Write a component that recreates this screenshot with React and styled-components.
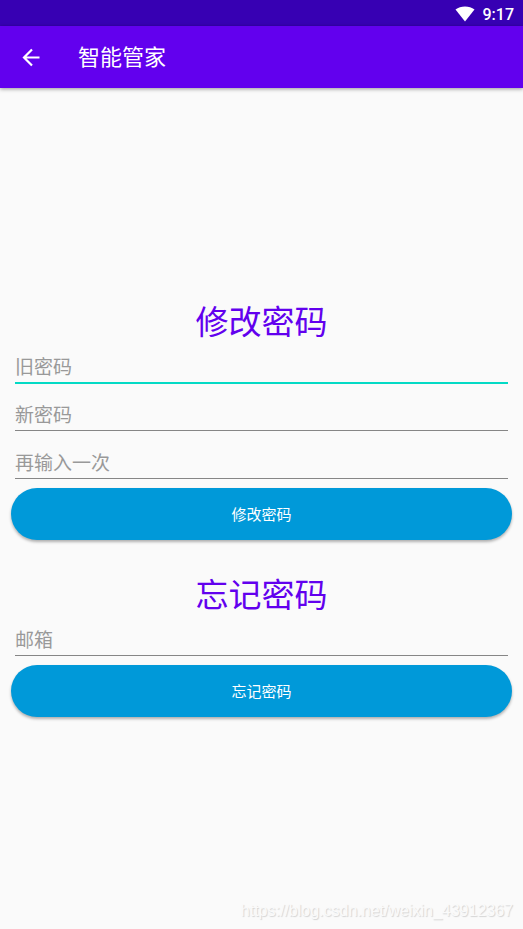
import React, { useState } from "react";
import styled, { createGlobalStyle } from "styled-components";

const GlobalStyle = createGlobalStyle`
  * {
    box-sizing: border-box;
  }
  body {
    margin: 0;
    background: #fafafa;
    font-family: Roboto, "Noto Sans CJK SC", sans-serif;
  }
`;

const Page = styled.div`
  min-height: 100vh;
  display: flex;
  flex-direction: column;
  position: relative;
`;

const StatusBar = styled.div`
  height: 26px;
  padding: 2px 9px 0 0;
  display: flex;
  justify-content: flex-end;
  align-items: center;
  gap: 8px;
  background: #3700b3;
  color: white;
  font-size: 16px;
  font-weight: 500;
  line-height: 24px;
`;

const Clock = styled.span`
  padding-top: 2px;
`;

const AppBar = styled.header`
  height: 62px;
  padding: 0 20px;
  display: flex;
  align-items: center;
  gap: 36px;
  background: #6200ee;
  color: white;
  box-shadow: 0 1px 4px rgba(0, 0, 0, 0.4);
`;

const BackButton = styled.button`
  display: flex;
  padding: 0;
  border: none;
  background: none;
  color: inherit;
  cursor: pointer;
`;

const Title = styled.h1`
  margin: 0;
  padding-top: 2px;
  font-size: 22px;
  font-weight: 400;
  line-height: 32px;
`;

const Main = styled.main`
  flex: 1;
  display: flex;
  flex-direction: column;
  justify-content: center;
  gap: 24px;
`;

const Form = styled.form`
  display: flex;
  flex-direction: column;
  padding: 0 11px 5px;
`;

const Heading = styled.h2`
  margin: 0;
  padding-top: 10px;
  color: #6200ee;
  font-size: 33px;
  font-weight: 400;
  line-height: 34px;
  text-align: center;
`;

const Field = styled.label`
  display: block;
  height: 48px;
  padding: 8px 4px 0;
`;

const Input = styled.input`
  display: block;
  width: 100%;
  height: 36px;
  padding: 4px 0 0;
  border: none;
  border-radius: 0;
  outline: none;
  background: linear-gradient(
      ${(props) => (props.$active ? "#03dac5, #03dac5" : "#868686, #868686")}
    )
    left bottom / 100% ${(props) => (props.$active ? "2px" : "1px")} no-repeat;
  background-position: left bottom ${(props) => (props.$active ? "0" : "1px")};
  color: #212121;
  font-family: inherit;
  font-size: 19px;
  &::placeholder {
    color: #999999;
    opacity: 1;
  }
`;

const Button = styled.button`
  height: 52px;
  margin-top: 4px;
  border: none;
  border-radius: 26px;
  background: #0099d9;
  color: white;
  font-family: inherit;
  font-size: 15px;
  box-shadow: 0 2px 3px rgba(0, 0, 0, 0.3);
  cursor: pointer;
`;

const Watermark = styled.div`
  position: absolute;
  right: 10px;
  bottom: 8px;
  color: #fafafa;
  font-family: "Liberation Sans", Arial, sans-serif;
  font-size: 16px;
  line-height: 20px;
  text-shadow: 1px 1px 1px #d4d4d4;
`;

const changeFields = [
  { name: "old", hint: "旧密码", type: "password" },
  { name: "new", hint: "新密码", type: "password" },
  { name: "again", hint: "再输入一次", type: "password" },
];
const forgetFields = [{ name: "email", hint: "邮箱", type: "email" }];

const WifiIcon = () => (
  <svg width="20" height="16" viewBox="0 0 20 16" aria-hidden="true">
    <path d="M10 15.5 L0.5 3.5 Q4.5 0.5 10 0.5 T19.5 3.5 Z" fill="white" />
  </svg>
);

const BackIcon = () => (
  <svg width="22" height="22" viewBox="0 0 22 22" aria-hidden="true">
    <path
      d="M19.5 11.5 H4 M12 3.5 L4 11.5 L12 19.5"
      fill="none"
      stroke="currentColor"
      strokeWidth="2.2"
    />
  </svg>
);

const PasswordForm = ({ title, fields, active, setActive }) => (
  <Form onSubmit={(e) => e.preventDefault()}>
    <Heading>{title}</Heading>
    {fields.map((field) => (
      <Field key={field.name}>
        <Input
          name={field.name}
          type={field.type}
          placeholder={field.hint}
          aria-label={field.hint}
          $active={active === field.name}
          onFocus={() => setActive(field.name)}
        />
      </Field>
    ))}
    <Button type="submit">{title}</Button>
  </Form>
);

const App = () => {
  const [active, setActive] = useState("old");
  return (
    <Page>
      <GlobalStyle />
      <StatusBar>
        <WifiIcon />
        <Clock>9:17</Clock>
      </StatusBar>
      <AppBar>
        <BackButton type="button" aria-label="返回">
          <BackIcon />
        </BackButton>
        <Title>智能管家</Title>
      </AppBar>
      <Main>
        <PasswordForm
          title="修改密码"
          fields={changeFields}
          active={active}
          setActive={setActive}
        />
        <PasswordForm
          title="忘记密码"
          fields={forgetFields}
          active={active}
          setActive={setActive}
        />
      </Main>
      <Watermark>https://blog.csdn.net/weixin_43912367</Watermark>
    </Page>
  );
};

export default App;
